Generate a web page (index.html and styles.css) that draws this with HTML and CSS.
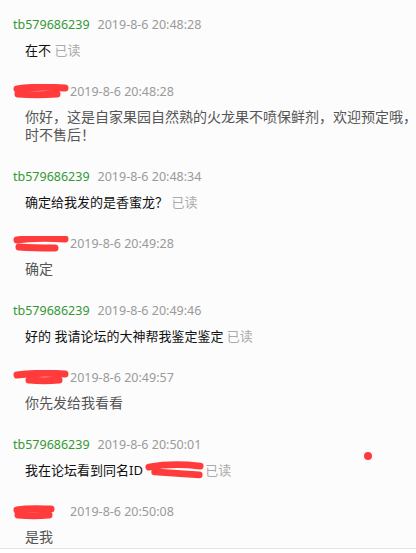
FILE: index.html
```html
<!DOCTYPE html>
<html>
<head>
    <meta charset="utf-8">
    <link rel="stylesheet" href="styles.css">
</head>
<body>
    <div class="chat">
        <div class="msg">
            <div class="head"><span class="name">tb579686239</span><span class="time">2019-8-6 20:48:28</span></div>
            <div class="text buyer">在不 <span class="read">已读</span></div>
        </div>

        <div class="msg">
            <div class="head">
                <svg class="mask" viewBox="0 0 56 16" width="56" height="16"><path d="M4 5 C16 3 36 3 52 4" /><path d="M5 10 C18 11 30 11 44 10" /></svg><span class="time seller-time">2019-8-6 20:48:28</span>
            </div>
            <div class="text seller">你好，这是自家果园自然熟的火龙果不喷保鲜剂，欢迎预定哦，时不售后！</div>
        </div>

        <div class="msg">
            <div class="head"><span class="name">tb579686239</span><span class="time">2019-8-6 20:48:34</span></div>
            <div class="text buyer">确定给我发的是香蜜龙？ <span class="read">已读</span></div>
        </div>

        <div class="msg">
            <div class="head">
                <svg class="mask" viewBox="0 0 56 16" width="56" height="16"><path d="M4 4 C18 2 36 2 52 3" /><path d="M6 11 C20 12 32 12 42 12" /></svg><span class="time seller-time">2019-8-6 20:49:28</span>
            </div>
            <div class="text seller">确定</div>
        </div>

        <div class="msg">
            <div class="head"><span class="name">tb579686239</span><span class="time">2019-8-6 20:49:46</span></div>
            <div class="text buyer">好的 我请论坛的大神帮我鉴定鉴定 <span class="read">已读</span></div>
        </div>

        <div class="msg">
            <div class="head">
                <svg class="mask" viewBox="0 0 56 16" width="56" height="16"><path d="M4 5 C20 3 38 3 52 4" /><path d="M16 10 C26 11 36 11 46 10" /></svg><span class="time seller-time">2019-8-6 20:49:57</span>
            </div>
            <div class="text seller">你先发给我看看</div>
        </div>

        <div class="msg">
            <div class="head"><span class="name">tb579686239</span><span class="time">2019-8-6 20:50:01</span></div>
            <div class="text buyer">我在论坛看到同名ID <svg class="mask inline" viewBox="0 0 62 18" width="60" height="18"><path d="M4 6 C20 3 40 3 57 5" /><path d="M10 11 C24 12 40 13 56 14" /></svg><span class="read">已读</span></div>
            <span class="dot"></span>
        </div>

        <div class="msg">
            <div class="head">
                <svg class="mask" viewBox="0 0 56 16" width="56" height="16"><path d="M4 6 C15 4 30 5 38 5" /><path d="M5 11 C15 12 26 12 36 11" /></svg><span class="time seller-time">2019-8-6 20:50:08</span>
            </div>
            <div class="text seller">是我</div>
        </div>
    </div>
</body>
</html>
```

FILE: styles.css
```css
html, body {
    overflow: hidden;
}

body {
    margin: 0;
    background: #ffffff;
    font-family: "Noto Sans", "Noto Sans CJK SC", sans-serif;
}

.chat {
    height: 549px;
    box-sizing: border-box;
    padding: 15px 0 0 13px;
    background: #fcfcfc;
    border-bottom: 1px solid #e4e4e4;
    overflow: hidden;
}

.msg {
    position: relative;
    margin-bottom: 23px;
}

.head {
    height: 20px;
    line-height: 20px;
    font-size: 12.5px;
    white-space: nowrap;
    display: flex;
    align-items: center;
}

.name {
    color: #339933;
}

.time {
    color: #9a9a9a;
    margin-left: 8px;
}

.time.seller-time {
    margin-left: 1px;
}

.mask {
    flex: none;
}

.mask path {
    fill: none;
    stroke: #ff3b3b;
    stroke-width: 7;
    stroke-linecap: round;
}

.mask.inline {
    vertical-align: -4px;
    margin-left: -1px;
}

.text {
    margin-top: 6px;
    padding-left: 12px;
    width: 400px;
    line-height: 18px;
}

.text.buyer {
    font-size: 13px;
    color: #111111;
}

.text.seller {
    font-size: 14px;
    color: #555555;
}

.read {
    font-size: 13px;
    color: #aaaaaa;
}

.dot {
    position: absolute;
    left: 351px;
    top: 17px;
    width: 8px;
    height: 8px;
    border-radius: 50%;
    background: #ff3b3b;
}
```
